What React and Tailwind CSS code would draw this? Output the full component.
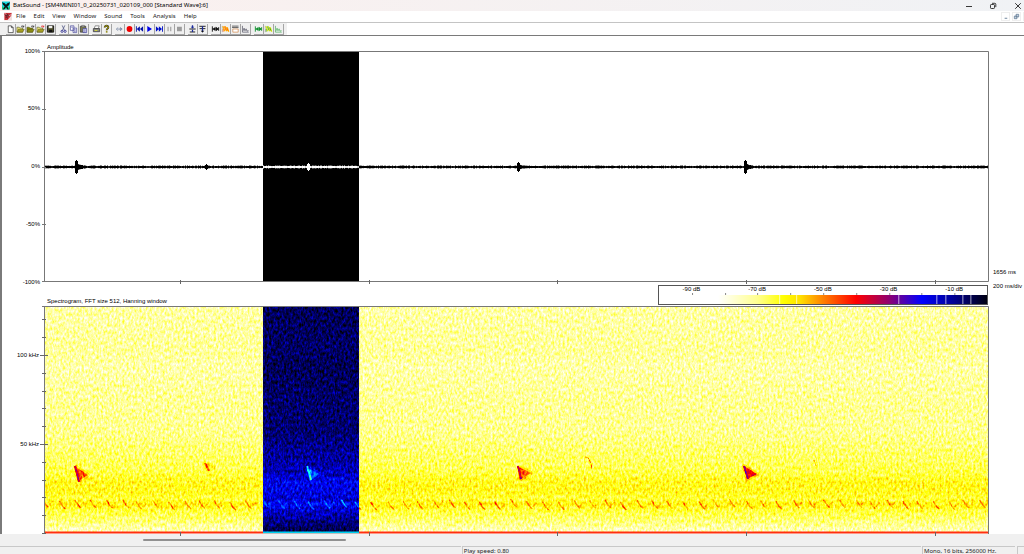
import React from "react";

const menuItems = ["File", "Edit", "View", "Window", "Sound", "Tools", "Analysis", "Help"];

// every icon is drawn on a 10 x 10 grid
const toolGroups = [
  [
    { name: "New", art: <path d="M2.5 1.5h3.5l2 2v5.5h-5.5z M6 1.5v2h2" fill="#fff" stroke="#333" strokeWidth=".8" /> },
    { name: "Open", art: <Folder mark="#222" /> },
    { name: "Open next", art: <Folder mark="#222" dark /> },
    { name: "Close file", art: <Folder mark="#e01010" /> },
    {
      name: "Save",
      art: (
        <>
          <path d="M1.5 1.5h7v7h-7z" fill="#4c4c28" stroke="#111" />
          <path d="M3 1.5h4v2.6h-4z" fill="#eee" />
          <path d="M3.5 6h3.5v2.5h-3.5z" fill="#111" />
        </>
      ),
    },
  ],
  [
    {
      name: "Cut",
      art: (
        <>
          <path d="M3.5 1l2.6 5.4M6.5 1l-2.6 5.4" stroke="#555c88" strokeWidth=".9" />
          <circle cx="3.4" cy="7.6" r="1.2" fill="none" stroke="#26268c" strokeWidth=".9" />
          <circle cx="6.8" cy="7.6" r="1.2" fill="none" stroke="#26268c" strokeWidth=".9" />
        </>
      ),
    },
    { name: "Copy", art: <path d="M1.5 1.5h4v5h-4z M4.5 4h4v5h-4z M2.5 3h2 M5.5 6h2 M5.5 7.5h2" fill="#fff" stroke="#4a4a9c" strokeWidth=".8" /> },
    {
      name: "Paste",
      art: (
        <>
          <path d="M1.5 2h6v6.5h-6z" fill="#7c7c50" stroke="#333" strokeWidth=".8" />
          <path d="M3 1h3v1.5h-3z" fill="#ddd" stroke="#333" strokeWidth=".5" />
          <path d="M4.5 4.5h4v4.5h-4z M5.5 6h2 M5.5 7.4h2" fill="#fff" stroke="#3a3a9c" strokeWidth=".8" />
        </>
      ),
    },
  ],
  [
    {
      name: "Print",
      art: (
        <>
          <path d="M3.5 1.5h4.5l-1 3h-4.5z" fill="#fff" stroke="#555" strokeWidth=".7" />
          <path d="M1.5 4.5h7v3.5h-7z" fill="#8a8a8a" stroke="#333" strokeWidth=".8" />
          <path d="M3 6.6h3" stroke="#dede30" />
        </>
      ),
    },
    {
      name: "About",
      art: (
        <>
          <path d="M3 3.2c0-2.4 4-2.4 4 0 0 1.4-1.8 1.5-1.8 3.2" fill="none" stroke="#222" strokeWidth="2" />
          <path d="M3 3.2c0-2.4 4-2.4 4 0 0 1.4-1.8 1.5-1.8 3.2" fill="none" stroke="#e0d000" strokeWidth="1" />
          <path d="M4.3 7.4h1.8v1.6h-1.8z" fill="#8a8000" />
        </>
      ),
    },
  ],
  [
    { name: "Play loop", art: <path d="M3.5 3.5l-2 1.6 2 1.6M3.5 5.1h2M6 3.5l2 1.6-2 1.6z" fill="none" stroke="#6b7c9c" strokeWidth=".9" /> },
    { name: "Record", art: <circle cx="5" cy="5" r="3.2" fill="#f00000" /> },
    { name: "Rewind", art: <path d="M1 2h1v6h-1z M5.4 2v6l-3.4-3z M9 2v6l-3.5-3z" fill="#000fa8" /> },
    { name: "Play", art: <path d="M2.6 1.6v6.8l5.2-3.4z" fill="#0000e8" /> },
    { name: "Forward", art: <path d="M1 2v6l3.5-3z M4.3 2v6l3.5-3z M7.8 2h1v6h-1z" fill="#0010c8" /> },
    { name: "Pause", art: <path d="M3.4 2.5v5M6.4 2.5v5" stroke="#9a9a9a" strokeWidth="1.2" /> },
    { name: "Stop", art: <path d="M2.2 2.5h5.4v5h-5.4z" fill="#9c9c9c" /> },
  ],
  [
    {
      name: "Zoom in vertically",
      art: (
        <>
          <path d="M1.5 5h7M2 8.3h6" stroke="#111" />
          <path d="M5 .8v3.4M5 5.8v2.6" stroke="#1a2a9c" strokeWidth="1.4" />
          <path d="M3 2.6h4l-2 1.8z" fill="#1a2a9c" />
        </>
      ),
    },
    {
      name: "Zoom out vertically",
      art: (
        <>
          <path d="M1.5 2h7M1.8 4.6h6.4" stroke="#111" />
          <path d="M5 2v6.6" stroke="#1a2a9c" strokeWidth="1.4" />
          <path d="M3 7h4l-2 2z" fill="#111" />
        </>
      ),
    },
  ],
  [
    { name: "Oscillogram", art: <Wave color="#111" /> },
    { name: "Spectrogram", art: <Bands a="#ff5a00" b="#ffb000" /> },
    {
      name: "Combined view",
      art: (
        <>
          <path d="M1.5 1.8h7M1.5 3.4h7" stroke="#111" strokeDasharray="1.5 .7" />
          <path d="M2 5h6v3.5h-6z" fill="#fff" stroke="#d08a50" strokeWidth=".8" />
        </>
      ),
    },
    { name: "Power spectrum", art: <Spectrum color="#555566" /> },
  ],
  [
    { name: "New oscillogram", art: <Wave color="#109030" /> },
    { name: "New spectrogram", art: <Bands a="#40a010" b="#d8e820" /> },
    { name: "New power spectrum", art: <Spectrum color="#50b060" /> },
  ],
];

function Folder({ mark, dark }) {
  return (
    <>
      <path d="M1 3h2.5l.8.9h3v4.6h-6.3z" fill={dark ? "#8a8a00" : "#f0e878"} stroke="#444420" strokeWidth=".6" />
      <path d="M2.6 5.3h6.6l-1.7 3.2h-6.3z" fill={dark ? "#8c8c10" : "#a8a020"} stroke="#444420" strokeWidth=".5" />
      <path d="M5.6 2.2q1.4-1.4 2.8.2M8.6 1.2v1.6h-1.6" fill="none" stroke={mark} strokeWidth=".8" />
    </>
  );
}

// horizontal double arrow between two bars
function Wave({ color }) {
  return (
    <>
      <path d="M1.5 2v6M1.5 5h7M8.500 3v4" fill="none" stroke={color} strokeWidth="1" />
      <path d="M5 2.500v5l-3-2.500z M5.500 2.500v5l3-2.500z" fill={color} />
    </>
  );
}

function Bands({ a, b }) {
  return (
    <>
      <path d="M1.4 1.5v7" stroke="#999" strokeWidth=".6" />
      <path d="M2 2l2.4 5.5M4.6 2l2 5.5M6.8 3l1.8 5" stroke={b} strokeWidth="1.5" />
      <path d="M2.4 5v3M3.6 2l2 4.5M6.2 3.4l1.6 3.4" stroke={a} strokeWidth=".9" />
    </>
  );
}

function Spectrum({ color }) {
  return <path d="M1.6 1.5v7h7M2.4 7l1-3 1 3 1.3-2.2 1 2.6 1.7-.6" fill="none" stroke={color} strokeWidth=".8" />;
}

// small seeded generator so that the trace is the same on every load
const seeded = (seed) => () => {
  seed = (seed * 16807) % 2147483647;
  return seed / 2147483647;
};

const PLOT_W = 944;
const timeTicks = [136, 325, 513, 702, 891];

const bursts = [
  { x: 32, size: 7, tail: 2 },
  { x: 162, size: 3, tail: 0 },
  { x: 264, size: 4, tail: 0 },
  { x: 474, size: 5, tail: 1 },
  { x: 701, size: 7, tail: 2 },
];

const buildTrace = () => {
  const rand = seeded(4711);
  let d = "";
  for (let x = 0; x < PLOT_W; x++) {
    let amp = 0.8 + rand() * 0.7;
    bursts.forEach((b) => {
      const off = x - b.x;
      if (Math.abs(off) < 2) amp = b.size - Math.abs(off) * 1;
      else if (off > 0 && off < 9) amp += (b.tail * (9 - off)) / 9;
    });
    d += `M${x + 0.5} ${(116 - amp).toFixed(1)}V${(116 + amp).toFixed(1)}`;
  }
  return d;
};

const trace = buildTrace();

// noise floor: distance from the top of the spectrogram, level
const floor = [
  [0, 0.275],
  [45, 0.285],
  [60, 0.275],
  [95, 0.29],
  [125, 0.295],
  [145, 0.32],
  [165, 0.345],
  [176, 0.385],
  [186, 0.385],
  [193, 0.36],
  [198, 0.4],
  [203, 0.365],
  [212, 0.33],
  [220, 0.29],
  [227, 0.25],
];

const gray = (v) => `rgb(${Math.round(v * 255)} ${Math.round(v * 255)} ${Math.round(v * 255)})`;

const calls = [
  { d: "M31 160l4 16", fan: "M32 161L44 169L36 174z", level: 0.68, echo: 0.55 },
  { d: "M161 157l4 8", fan: "M161 157L170 160L165 165z", level: 0.6, echo: 0.42 },
  { d: "M263 160l4 14", fan: "M264 162L276 168L267 174z", level: 0.62, echo: 0.48 },
  { d: "M474 160l3 13", fan: "M475 161L487 167L477 173z", level: 0.66, echo: 0.55 },
  { d: "M700 160l4 13", fan: "M700 160L713 168L703 173z", level: 0.7, echo: 0.6 },
];

const insects = () => {
  const rand = seeded(99);
  const marks = [];
  for (let x = -2; x < PLOT_W; x += 15.6) {
    const y = 193 + rand() * 3;
    marks.push({ d: `M${(x + rand() * 3).toFixed(1)} ${y.toFixed(1)}l3 5l3 3`, level: 0.49 + rand() * 0.05 });
    if (rand() > 0.4) marks.push({ d: `M${(x + 7).toFixed(1)} ${(y + 6).toFixed(1)}l4 -4`, level: 0.45 });
  }
  return marks;
};

const insectMarks = insects();

const TimeTicks = ({ y }) => (
  <path d={timeTicks.map((x) => `M${x + 0.5} ${y - 2}v4`).join("")} stroke="#666" />
);

const AmplitudePlot = () => (
  <svg viewBox="0 0 944 231" preserveAspectRatio="none" className="isolate block h-full w-full overflow-visible" role="img" aria-label="Amplitude over time">
    <rect width="944" height="231" fill="#fff" />
    <path d={trace} stroke="#000" fill="none" />
    <rect x="219" y="1" width="96" height="230" fill="#fff" className="mix-blend-difference" />
    <path d="M-2 .5H944.5V230.5H-2M.5 0V231" fill="none" stroke="#777" />
    <path d="M-2 58.5h4M-2 116.5h4M-2 173.5h4" stroke="#777" />
    <TimeTicks y={231} />
  </svg>
);

const SpectrogramPlot = () => (
  <svg viewBox="0 0 944 228" preserveAspectRatio="none" className="isolate block h-full w-full overflow-visible" role="img" aria-label="Spectrogram">
    <defs>
      <linearGradient id="floor" x1="0" y1="0" x2="0" y2="1">
        {floor.map(([y, v]) => (
          <stop key={y} offset={y / 227} stopColor={gray(v)} />
        ))}
      </linearGradient>
      <filter id="palette" filterUnits="userSpaceOnUse" x="0" y="0" width="944" height="227" colorInterpolationFilters="sRGB">
        <feTurbulence type="fractalNoise" baseFrequency="0.47 0.28" numOctaves="2" seed="7" />
        <feColorMatrix values="0 0 0 1 0  0 0 0 1 0  0 0 0 1 0  0 0 0 0 1" result="noise" />
        <feComposite in="SourceGraphic" in2="noise" operator="arithmetic" k1="0" k2="1" k3="0.27" k4="-0.135" />
        <feComponentTransfer>
          <feFuncR type="table" tableValues="1 1 1 1 1 1 1 .53 0 0 0" />
          <feFuncG type="table" tableValues="1 1 1 1 1 .56 0 0 0 0 0" />
          <feFuncB type="table" tableValues="1 1 1 .56 0 0 0 .53 1 .55 .05" />
        </feComponentTransfer>
      </filter>
    </defs>
    <g filter="url(#palette)" fill="none">
      <rect width="944" height="227" fill="url(#floor)" />
      {insectMarks.map((m) => (
        <path key={m.d} d={m.d} stroke={gray(m.level)} strokeWidth="1.5" />
      ))}
      {calls.map((c) => (
        <g key={c.d}>
          <path d={c.fan} stroke={gray(c.echo)} strokeOpacity=".35" strokeWidth="4" strokeLinejoin="round" />
          <path d={c.fan} fill={gray(c.echo)} />
          <path d={c.d} stroke={gray(c.level)} strokeWidth="2" />
        </g>
      ))}
      <path d="M541 151q5 -1 7 12" stroke={gray(0.53)} />
      <path d="M770 154l2 6" stroke={gray(0.51)} />
    </g>
    <path d="M0 226.5H944" stroke="#ff3010" strokeWidth="2" />
    <rect x="219" y="0" width="96" height="227.500" fill="#fff" className="mix-blend-difference" />
    <path d="M-2 .5H944.5V228M.5 0V228" fill="none" stroke="#777" />
    <path d="M-2 13.5h4M-2 31.5h4M-4 49.5h8M-2 67.5h4M-2 85.5h4M-2 102.5h4M-2 120.5h4M-4 138.5h8M-2 156.5h4M-2 174.5h4M-2 191.5h4M-2 209.5h4M-2 227.5h4" stroke="#666" />
    <TimeTicks y={228} />
  </svg>
);

const ColorScale = () => (
  <div className="mb-px flex h-5 w-[35%] flex-col border border-[#555] bg-white">
    <div className="grid grid-cols-5 text-center leading-[7px]">
      {["-90 dB", "-70 dB", "-50 dB", "-30 dB", "-10 dB"].map((label) => (
        <span key={label}>{label}</span>
      ))}
    </div>
    <svg viewBox="0 0 328 11" preserveAspectRatio="none" className="block min-h-0 w-full flex-1">
      <defs>
        <linearGradient id="scale">
          <stop offset=".18" stopColor="#fff" />
          <stop offset=".3" stopColor="#ffff90" />
          <stop offset=".38" stopColor="#ff0" />
          <stop offset=".43" stopColor="#ffe000" />
          <stop offset=".5" stopColor="#ff8000" />
          <stop offset=".6" stopColor="#f00" />
          <stop offset=".7" stopColor="#900070" />
          <stop offset=".8" stopColor="#00f" />
          <stop offset=".9" stopColor="#000090" />
          <stop offset="1" stopColor="#000010" />
        </linearGradient>
      </defs>
      <rect y="2" width="328" height="9" fill="url(#scale)" />
      <path d="M33.5 0v2M66.5 0v2M98.5 0v2M131.5 0v2M164.5 0v2M197.5 0v2M230.5 0v2M262.5 0v2M295.5 0v2" stroke="#888" />
      <path d="M120.5 2v9M137.5 2v9M239.5 2v9M277.5 2v9M286.5 2v9M303.5 2v9M311.5 2v9" stroke="#fff" strokeOpacity=".65" />
    </svg>
  </div>
);

const ToolButton = ({ name, art }) => (
  <button
    aria-label={name}
    className="h-[11px] w-[10px] border-r border-b border-r-[#a5a5a5] border-b-[#a5a5a5] bg-[#f0f0f0]"
  >
    <svg viewBox="0 0 10 10" className="block h-[10px] w-[9px]">
      {art}
    </svg>
  </button>
);

const App = () => {
  return (
    <div className="flex h-screen flex-col overflow-hidden bg-white font-['Noto_Sans','Open_Sans',sans-serif] text-[6px] text-[#222]">
      {/* title bar */}
      <header className="flex h-[11px] shrink-0 items-center bg-linear-to-r from-[#fbf0ee] to-[#f0f2f5] pl-[2px]">
        <svg viewBox="0 0 24 24" className="h-[9px] w-[8px]">
          <rect width="24" height="24" fill="#19d8e0" />
          <path d="M0 2l8 3 4 5 4-5 8-3-3 9-5 3 5 10h-5l-4-6-5 6H2l6-10-5-4z" fill="#0b1616" />
          <path d="M0 14l5 3-3 7H0zM24 14l-5 3 3 7h2zM10 20l2-2 2 2v4h-4z" fill="#23c46a" />
        </svg>
        <h1 className="ml-[3px] flex-1 leading-[11px] text-black">
          BatSound - [SM4MINI01_0_20250731_020109_000 [Standard Wave]:6]
        </h1>
        <div className="flex">
          <button aria-label="Minimize" className="flex w-6 justify-center">
            <svg viewBox="0 0 8 8" className="size-2"><path d="M1 4.5h6" stroke="#222" strokeWidth=".9" /></svg>
          </button>
          <button aria-label="Restore" className="flex w-6 justify-center">
            <svg viewBox="0 0 8 8" className="size-2" fill="none" stroke="#222" strokeWidth=".9">
              <rect x="1.5" y="2.5" width="4" height="4" rx=".8" />
              <path d="M3 1.3h2.8q1 0 1 1v2.8" />
            </svg>
          </button>
          <button aria-label="Close" className="flex w-[19px] justify-end pr-[2px]">
            <svg viewBox="0 0 8 8" className="size-2"><path d="M1.2 1.2l5.6 5.6M6.8 1.2l-5.6 5.6" stroke="#222" strokeWidth=".9" /></svg>
          </button>
        </div>
      </header>

      {/* menu */}
      <nav className="flex h-[12px] shrink-0 items-center border-b border-[#c4c4c4] bg-white pl-[4px]">
        <svg viewBox="0 0 18 18" className="h-[9px] w-[8px]">
          <rect width="18" height="18" fill="#f0dede" />
          <path d="M1 1h16v3l-5 3 5-1-9 11H1z" fill="#cf3038" />
          <path d="M2 4l3 5 2-6 2 6 4-6M3 12l4-2 1 4" fill="none" stroke="#301c24" strokeWidth="1.4" />
          <path d="M3 2l2 3M11 8l3-4" stroke="#fff" strokeWidth="1.2" />
        </svg>
        <div className="ml-[4px] flex flex-1 gap-2">
          {menuItems.map((item) => (
            <button key={item} className="leading-[11px]">
              {item}
            </button>
          ))}
        </div>
        <div className="flex gap-[2px] text-[#5b7690]">
          <button aria-label="Minimize document" className="flex h-[9px] w-[9px] items-end justify-center border border-[#eee]">
            <svg viewBox="0 0 8 8" className="size-[7px]"><path d="M3 6h3" stroke="currentColor" /></svg>
          </button>
          <button aria-label="Restore document" className="flex h-[9px] w-[9px] items-center justify-center border border-[#eee]">
            <svg viewBox="0 0 8 8" className="size-[7px]" fill="#c4d2de" stroke="currentColor" strokeWidth=".8">
              <path d="M3.5 1.5h3v3h-3zM1.5 3.5h3v3h-3z" />
            </svg>
          </button>
          <span className="w-px border-l border-[#eee]"></span>
        </div>
      </nav>

      {/* toolbar */}
      <div role="toolbar" className="flex h-[12px] shrink-0 bg-white">
        <div className="flex items-center gap-[3px] bg-[#f0f0f0] pr-[3px] pl-[6px]">
          {toolGroups.map((group) => (
            <div key={group[0].name} className="flex">
              {group.map((tool) => (
                <ToolButton key={tool.name} name={tool.name} art={tool.art} />
              ))}
            </div>
          ))}
        </div>
      </div>

      {/* document */}
      <main className="grid min-h-0 flex-1 grid-cols-[42px_minmax(0,1fr)_36px] grid-rows-[15px_minmax(0,231fr)_24px_minmax(0,228fr)] border-t border-l-2 border-t-[#7a7a7a] border-l-[#7a7a7a] bg-white font-['Liberation_Sans',Arial,sans-serif] text-black">
        <h2 className="col-start-2 self-end pl-[3px] leading-[8px]">Amplitude</h2>

        <div className="col-start-1 row-start-2 flex flex-col justify-between pr-[4px] text-right">
          {["100%", "50%", "0%", "-50%", "-100%"].map((label) => (
            <span key={label} className="flex h-0 items-center justify-end">{label}</span>
          ))}
        </div>
        <div className="col-start-2 row-start-2">
          <AmplitudePlot />
        </div>
        <p className="col-start-3 row-start-2 self-end pb-[6px] pl-[5px] leading-[8px]">1656 ms</p>

        <div className="col-start-2 row-start-3 flex items-end justify-between">
          <h2 className="pl-[3px] leading-[9px]">Spectrogram, FFT size 512, Hanning window</h2>
          <ColorScale />
        </div>
        <p className="col-start-3 row-start-3 pl-[5px] leading-[8px] whitespace-nowrap">200 ms/div</p>

        {/* 128 kHz at the top of the axis */}
        <div className="col-start-1 row-start-4 grid grid-rows-[49fr_89fr_90fr] pr-[5px] text-right">
          <span className="row-start-2 flex h-0 items-center justify-end">100 kHz</span>
          <span className="row-start-3 flex h-0 items-center justify-end">50 kHz</span>
        </div>
        <div className="col-start-2 row-start-4">
          <SpectrogramPlot />
        </div>
      </main>

      {/* horizontal scroll bar */}
      <div className="h-[12px] shrink-0 bg-[#f0f0f0] pt-[5px] pl-[14%]">
        <div className="h-[2px] w-[23%] rounded-full bg-[#909090]"></div>
      </div>

      <footer className="flex h-[8px] shrink-0 bg-[#f0f0f0] leading-[8px]">
        <div className="w-[45%] border-t border-[#c8c8c8]"></div>
        <div className="ml-px flex-1 border-t border-l border-[#c8c8c8] pl-px">Play speed: 0.80</div>
        <div className="ml-px w-[93px] border-t border-l border-[#c8c8c8] pl-px whitespace-nowrap">Mono, 16 bits, 256000 Hz.</div>
        <div className="ml-[2px] w-[7px] border-t border-l border-[#c8c8c8]"></div>
      </footer>
    </div>
  );
};

export default App;
